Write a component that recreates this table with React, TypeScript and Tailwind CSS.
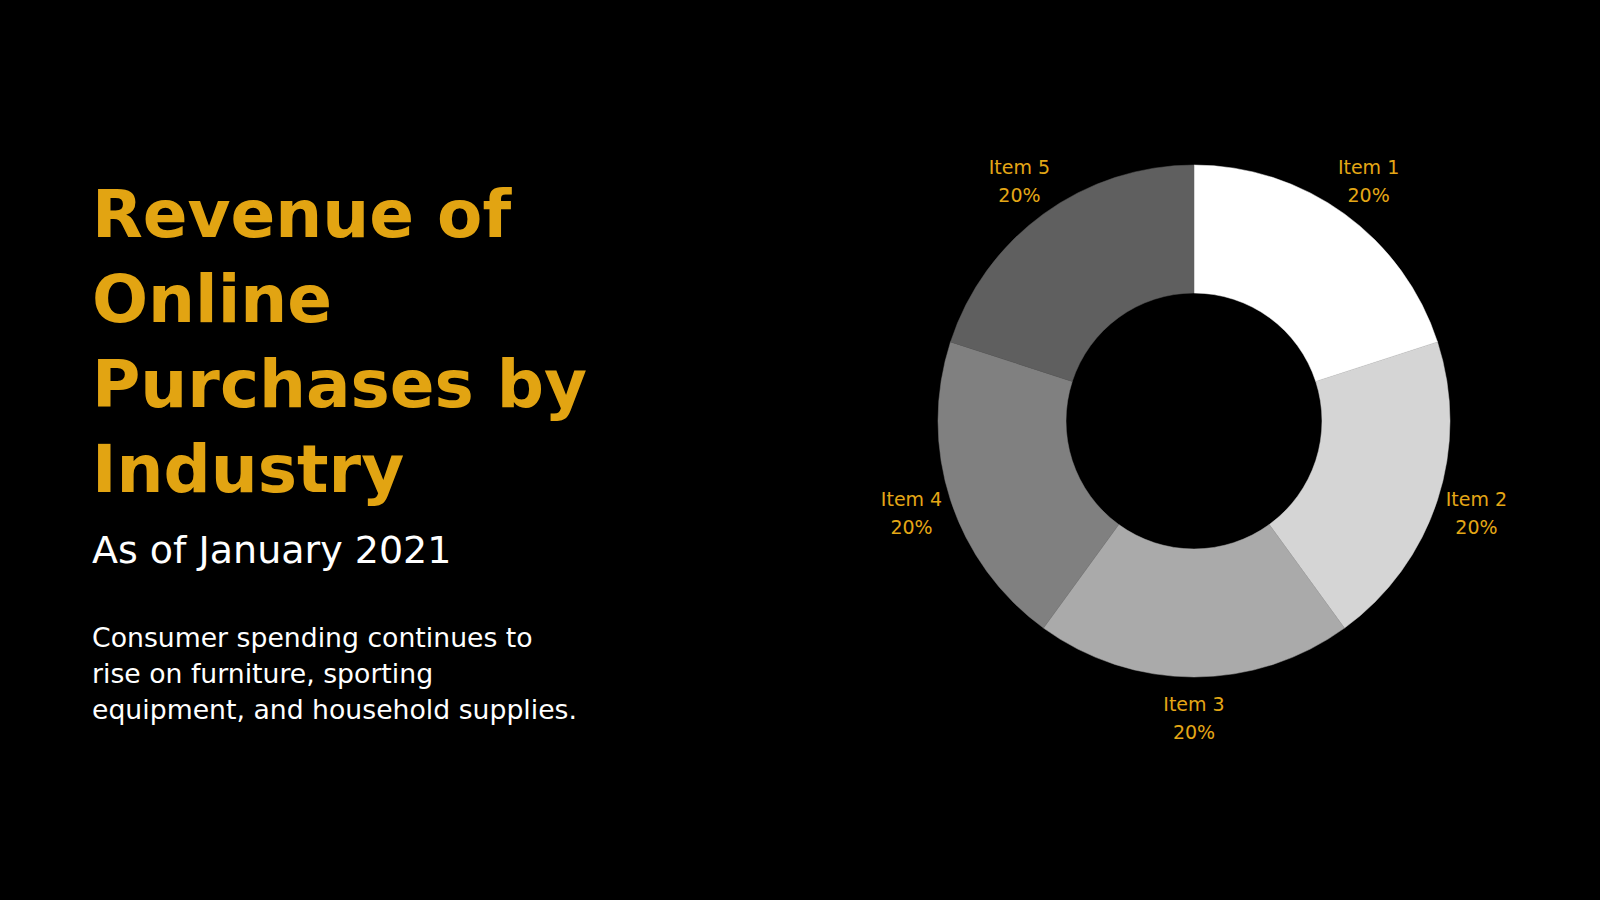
import React from 'react';

const CX = 350;
const CY = 350;
const OUTER = 256;
const INNER = 128;
const LABEL_R = 297;

const slices = [
  { name: 'Item 1', value: 20, color: '#ffffff' },
  { name: 'Item 2', value: 20, color: '#d5d5d5' },
  { name: 'Item 3', value: 20, color: '#aaaaaa' },
  { name: 'Item 4', value: 20, color: '#808080' },
  { name: 'Item 5', value: 20, color: '#5f5f5f' },
];

// angle in degrees, clockwise from 12 o'clock
const point = (r: number, deg: number) => {
  const a = (deg * Math.PI) / 180;
  return [CX + r * Math.sin(a), CY - r * Math.cos(a)];
};

const arcPath = (start: number, end: number) => {
  const [x1, y1] = point(OUTER, start);
  const [x2, y2] = point(OUTER, end);
  const [x3, y3] = point(INNER, end);
  const [x4, y4] = point(INNER, start);
  const large = end - start > 180 ? 1 : 0;
  return `M ${x1} ${y1} A ${OUTER} ${OUTER} 0 ${large} 1 ${x2} ${y2} L ${x3} ${y3} A ${INNER} ${INNER} 0 ${large} 0 ${x4} ${y4} Z`;
};

const DonutChart = () => {
  const total = slices.reduce((s, d) => s + d.value, 0);
  let acc = 0;
  const parts = slices.map(d => {
    const start = (acc / total) * 360;
    acc += d.value;
    const end = (acc / total) * 360;
    const [lx, ly] = point(LABEL_R, (start + end) / 2);
    return { ...d, start, end, lx, ly };
  });
  return (
    <svg width="700" height="700" viewBox="0 0 700 700" className="shrink-0 mt-[71px]">
      {parts.map(p => (
        <path key={p.name} d={arcPath(p.start, p.end)} fill={p.color} stroke={p.color} strokeWidth="0.5" />
      ))}
      {parts.map(p => (
        <text
          key={p.name + '-label'}
          x={p.lx}
          textAnchor="middle"
          fill="#e4a716"
          className="font-['DejaVu_Sans',sans-serif] text-[19px]"
        >
          <tspan x={p.lx} y={p.ly - 7}>{p.name}</tspan>
          <tspan x={p.lx} y={p.ly + 21}>{p.value}%</tspan>
        </text>
      ))}
    </svg>
  );
};

const App = () => {
  return (
    <div className="w-full h-[900px] bg-black flex overflow-hidden font-['DejaVu_Sans',sans-serif]">
      {/* Text column */}
      <div className="w-[844px] shrink-0 pl-[92px] pt-[172px]">
        <h1 className="text-[66px] leading-[85px] font-bold text-[#e2a412]">
          Revenue of
          <br />
          Online
          <br />
          Purchases by
          <br />
          Industry
        </h1>
        <h2 className="mt-[14px] text-[38px] leading-[48px] text-white">As of January 2021</h2>
        <p className="mt-[46px] text-[26.7px] leading-[36px] text-white">
          Consumer spending continues to
          <br />
          rise on furniture, sporting
          <br />
          equipment, and household supplies.
        </p>
      </div>
      {/* Chart */}
      <DonutChart />
    </div>
  );
};

export default App;
